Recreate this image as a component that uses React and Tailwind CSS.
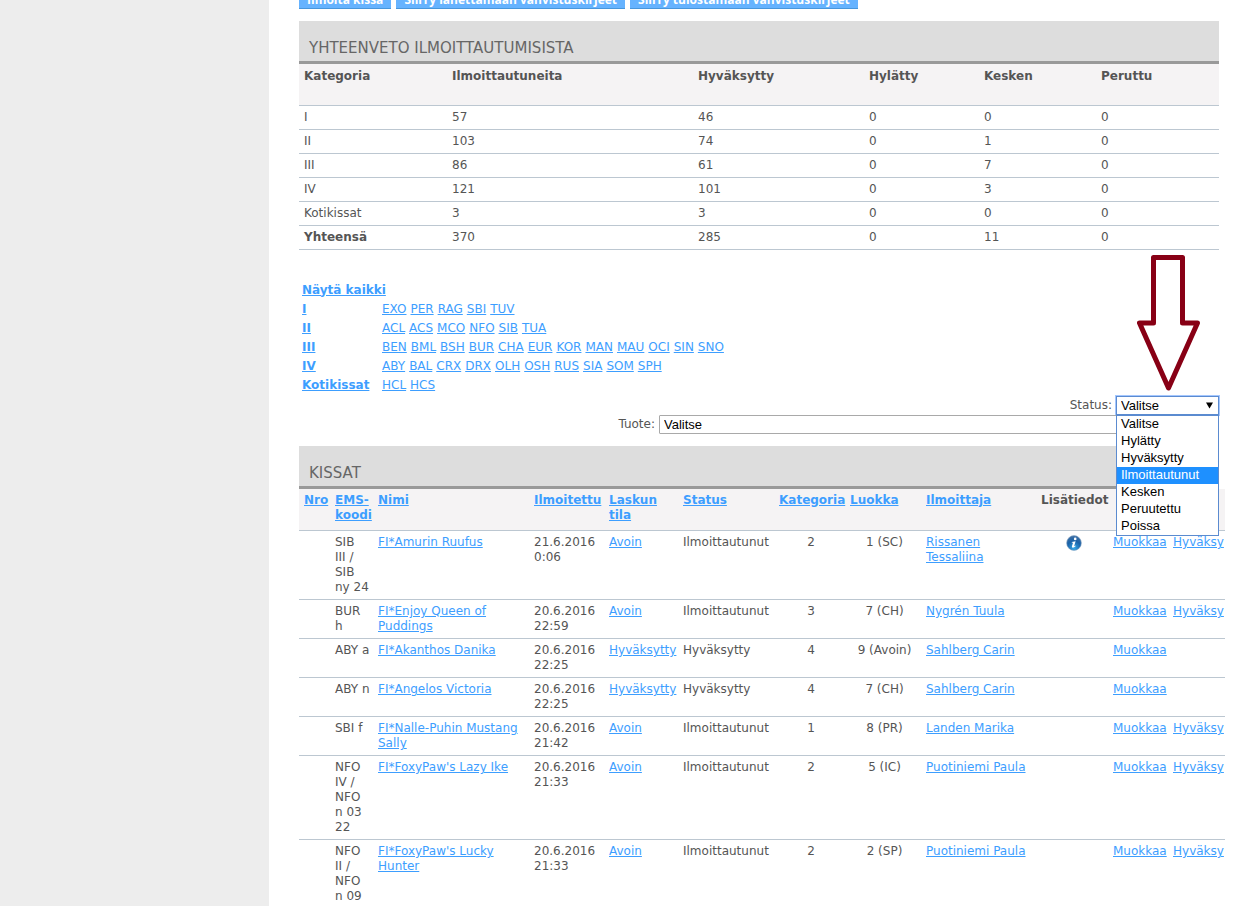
const summaryHeaders = ['Kategoria', 'Ilmoittautuneita', 'Hyväksytty', 'Hylätty', 'Kesken', 'Peruttu'];

const summaryRows = [
  ['I', 57, 46, 0, 0, 0],
  ['II', 103, 74, 0, 1, 0],
  ['III', 86, 61, 0, 7, 0],
  ['IV', 121, 101, 0, 3, 0],
  ['Kotikissat', 3, 3, 0, 0, 0],
  ['Yhteensä', 370, 285, 0, 11, 0],
];

const breedGroups = [
  { name: 'I', breeds: ['EXO', 'PER', 'RAG', 'SBI', 'TUV'] },
  { name: 'II', breeds: ['ACL', 'ACS', 'MCO', 'NFO', 'SIB', 'TUA'] },
  {
    name: 'III',
    breeds: ['BEN', 'BML', 'BSH', 'BUR', 'CHA', 'EUR', 'KOR', 'MAN', 'MAU', 'OCI', 'SIN', 'SNO'],
  },
  { name: 'IV', breeds: ['ABY', 'BAL', 'CRX', 'DRX', 'OLH', 'OSH', 'RUS', 'SIA', 'SOM', 'SPH'] },
  { name: 'Kotikissat', breeds: ['HCL', 'HCS'] },
];

const statusOptions = ['Valitse', 'Hylätty', 'Hyväksytty', 'Ilmoittautunut', 'Kesken', 'Peruutettu', 'Poissa'];

const cats = [
  { ems: 'SIB III\u00a0/ SIB ny\u00a024', name: 'FI*Amurin Ruufus', date: '21.6.2016', time: '0:06', bill: 'Avoin', status: 'Ilmoittautunut', category: 2, cls: '1 (SC)', owner: 'Rissanen Tessaliina', info: true },
  { ems: 'BUR h', name: 'FI*Enjoy Queen of Puddings', date: '20.6.2016', time: '22:59', bill: 'Avoin', status: 'Ilmoittautunut', category: 3, cls: '7 (CH)', owner: 'Nygrén Tuula' },
  { ems: 'ABY a', name: 'FI*Akanthos Danika', date: '20.6.2016', time: '22:25', bill: 'Hyväksytty', status: 'Hyväksytty', category: 4, cls: '9 (Avoin)', owner: 'Sahlberg Carin' },
  { ems: 'ABY n', name: 'FI*Angelos Victoria', date: '20.6.2016', time: '22:25', bill: 'Hyväksytty', status: 'Hyväksytty', category: 4, cls: '7 (CH)', owner: 'Sahlberg Carin' },
  { ems: 'SBI f', name: 'FI*Nalle-Puhin Mustang Sally', date: '20.6.2016', time: '21:42', bill: 'Avoin', status: 'Ilmoittautunut', category: 1, cls: '8 (PR)', owner: 'Landen Marika' },
  { ems: 'NFO IV / NFO n 03 22', name: "FI*FoxyPaw's Lazy Ike", date: '20.6.2016', time: '21:33', bill: 'Avoin', status: 'Ilmoittautunut', category: 2, cls: '5 (IC)', owner: 'Puotiniemi Paula' },
  { ems: 'NFO II / NFO n 09', name: "FI*FoxyPaw's Lucky Hunter", date: '20.6.2016', time: '21:33', bill: 'Avoin', status: 'Ilmoittautunut', category: 2, cls: '2 (SP)', owner: 'Puotiniemi Paula' },
];

const Link = ({ children, className = '' }) => (
  <a href="#" className={`text-[#3d9eff] underline ${className}`}>
    {children}
  </a>
);

const ActionButton = ({ children }) => (
  <button
    type="button"
    className="h-6 px-2 pt-1.5 bg-[#66b3ff] border-b border-[#4796dc] font-['Open_Sans',sans-serif] text-white font-bold leading-[15px] whitespace-nowrap"
  >
    {children}
  </button>
);

const SectionTitle = ({ children }) => (
  <h2 className="h-[43px] px-2.5 pt-4 bg-[#ddd] border-b-3 border-[#999] text-[15px] leading-[22px] text-[#666]">
    {children}
  </h2>
);

const InfoIcon = () => (
  <svg width="16" height="16" viewBox="0 0 16 16" className="inline-block align-top" role="img" aria-label="Lisätiedot">
    <defs>
      <radialGradient id="info-ball" cx="0.5" cy="0.85" r="0.8">
        <stop offset="0" stopColor="#35a8e8" />
        <stop offset="0.6" stopColor="#1a62a8" />
        <stop offset="1" stopColor="#3b6ea5" />
      </radialGradient>
    </defs>
    <circle cx="8" cy="8" r="7.4" fill="url(#info-ball)" stroke="#8fa9c4" strokeWidth="0.6" />
    <circle cx="9.2" cy="3.9" r="1.3" fill="#fff" />
    <path d="M5.8 6.9 L9.6 6.3 L8.1 11.3 L9.6 10.6 L9.4 11.5 Q7.8 12.9 6.4 12.6 Q5.6 12.3 6 11 L7 7.7 L5.7 7.6 Z" fill="#fff" />
  </svg>
);

const SelectArrow = () => (
  <svg width="7" height="7" viewBox="0 0 7 7" className="absolute right-1.5 top-1.5 pointer-events-none">
    <path d="M0 0.5 H7 L3.5 6.5 Z" fill="#000" />
  </svg>
);

// Hand-drawn pointer above the status drop-down
const PointerArrow = () => (
  <svg width="64" height="138" viewBox="0 0 64 138" className="absolute left-[21px] bottom-[23px] pointer-events-none">
    <path
      d="M16.5 3.5 H45.5 V69 H60.5 L31.5 134 L2.5 69 H16.5 Z"
      fill="#fff"
      stroke="#880015"
      strokeWidth="5"
      strokeLinejoin="round"
    />
  </svg>
);

const Summary = () => (
  <section className="mt-3">
    <SectionTitle>YHTEENVETO ILMOITTAUTUMISISTA</SectionTitle>
    <table className="w-full table-fixed border-collapse text-left">
      <colgroup>
        <col className="w-[148px]" />
        <col className="w-[246px]" />
        <col className="w-[171px]" />
        <col className="w-[115px]" />
        <col className="w-[117px]" />
        <col className="w-[123px]" />
      </colgroup>
      <thead>
        <tr className="h-[41px] bg-[#f5f3f4] border-b border-[#bcc7d1] align-top">
          {summaryHeaders.map((header) => (
            <th key={header} className="px-[5px] pt-[5px]">{header}</th>
          ))}
        </tr>
      </thead>
      <tbody>
        {summaryRows.map(([category, ...counts]) => (
          <tr key={category} className="h-6 border-b border-[#bcc7d1]">
            <td className={category === 'Yhteensä' ? 'px-[5px] font-bold' : 'px-[5px]'}>{category}</td>
            {counts.map((count, i) => (
              <td key={i} className="px-[5px]">{count}</td>
            ))}
          </tr>
        ))}
      </tbody>
    </table>
  </section>
);

const BreedLinks = () => (
  <nav className="mt-[31px] pl-[3px] grid grid-cols-[80px_1fr] leading-[19px]">
    <div className="col-span-2">
      <Link className="font-bold">Näytä kaikki</Link>
    </div>
    {breedGroups.map(({ name, breeds }) => (
      <div key={name} className="contents">
        <div>
          <Link className="font-bold">{name}</Link>
        </div>
        <div className="flex gap-1">
          {breeds.map((breed) => (
            <Link key={breed}>{breed}</Link>
          ))}
        </div>
      </div>
    ))}
  </nav>
);

const Filters = () => (
  <form className="mt-px flex flex-col items-end">
    <div className="flex items-center gap-1">
      <label htmlFor="status">Status:</label>
      <div className="relative w-[103px] h-[19px]">
        <PointerArrow />
        <select
          id="status"
          className="block w-full h-full pl-1 appearance-none bg-white border border-[#5b8bd0] outline outline-[#a5c7fe] font-['Liberation_Sans',Arial,sans-serif] text-[13px] leading-[17px] text-black"
        >
          {statusOptions.map((option) => (
            <option key={option}>{option}</option>
          ))}
        </select>
        <SelectArrow />
        <ul className="absolute z-10 top-full left-0 w-full bg-white border border-[#5b8bd0] font-['Liberation_Sans',Arial,sans-serif] text-[13px] leading-[15px] text-black">
          {statusOptions.map((option) => (
            <li
              key={option}
              className={option === 'Ilmoittautunut' ? 'pl-1 pb-0.5 bg-[#1e90ff] text-white' : 'pl-1 pb-0.5'}
            >
              {option}
            </li>
          ))}
        </ul>
      </div>
    </div>
    <div className="flex items-center gap-1">
      <label htmlFor="product">Tuote:</label>
      <div className="relative w-[560px] h-[19px]">
        <select
          id="product"
          className="block w-full h-full pl-1 appearance-none bg-white border border-[#a9a9a9] rounded-[1px] font-['Liberation_Sans',Arial,sans-serif] text-[13px] leading-[17px] text-black"
        >
          <option>Valitse</option>
        </select>
      </div>
    </div>
  </form>
);

const CatTable = () => (
  <section className="mt-3">
    <SectionTitle>KISSAT</SectionTitle>
    <div className="-mr-1.5">
      <table className="w-full table-fixed border-collapse text-left [&_td]:pl-[5px] [&_td]:pr-0.5 [&_td]:py-1 [&_th]:pl-[5px] [&_th]:pr-0.5 [&_th]:pt-1">
        <colgroup>
          <col className="w-[31px]" />
          <col className="w-[43px]" />
          <col className="w-[156px]" />
          <col className="w-[75px]" />
          <col className="w-[74px]" />
          <col className="w-[96px]" />
          <col className="w-[71px]" />
          <col className="w-[76px]" />
          <col className="w-[115px]" />
          <col className="w-[72px]" />
          <col className="w-[60px]" />
          <col className="w-[57px]" />
        </colgroup>
        <thead>
          <tr className="h-[42px] bg-[#f5f3f4] border-b border-[#bcc7d1] align-top">
            <th><Link>Nro</Link></th>
            <th><Link>EMS-koodi</Link></th>
            <th><Link>Nimi</Link></th>
            <th><Link>Ilmoitettu</Link></th>
            <th><Link>Laskun tila</Link></th>
            <th><Link>Status</Link></th>
            <th><Link>Kategoria</Link></th>
            <th><Link>Luokka</Link></th>
            <th><Link>Ilmoittaja</Link></th>
            <th>Lisätiedot</th>
            <th></th>
            <th></th>
          </tr>
        </thead>
        <tbody>
          {cats.map((cat) => (
            <tr key={cat.name} className="border-b border-[#bcc7d1] align-top">
              <td></td>
              <td>{cat.ems}</td>
              <td><Link>{cat.name}</Link></td>
              <td>{cat.date} {cat.time}</td>
              <td><Link>{cat.bill}</Link></td>
              <td>{cat.status}</td>
              <td className="text-center">{cat.category}</td>
              <td className="text-center">{cat.cls}</td>
              <td><Link>{cat.owner}</Link></td>
              <td className="text-center">{cat.info && <InfoIcon />}</td>
              <td><Link>Muokkaa</Link></td>
              <td>{cat.status === 'Ilmoittautunut' && <Link>Hyväksy</Link>}</td>
            </tr>
          ))}
        </tbody>
      </table>
    </div>
  </section>
);

export default function App() {
  return (
    <div className="flex h-screen overflow-hidden bg-white font-['DejaVu_Sans',Verdana,sans-serif] text-[12px] leading-[15px] text-[#555]">
      <aside className="w-[269px] shrink-0 bg-[#ededed]" />
      <main className="flex-1 min-w-0 -mt-[15px] pl-[30px] pr-7">
        <div className="flex gap-[5px]">
          <ActionButton>Ilmoita kissa</ActionButton>
          <ActionButton>Siirry lähettämään vahvistuskirjeet</ActionButton>
          <ActionButton>Siirry tulostamaan vahvistuskirjeet</ActionButton>
        </div>
        <Summary />
        <BreedLinks />
        <Filters />
        <CatTable />
      </main>
    </div>
  );
}
